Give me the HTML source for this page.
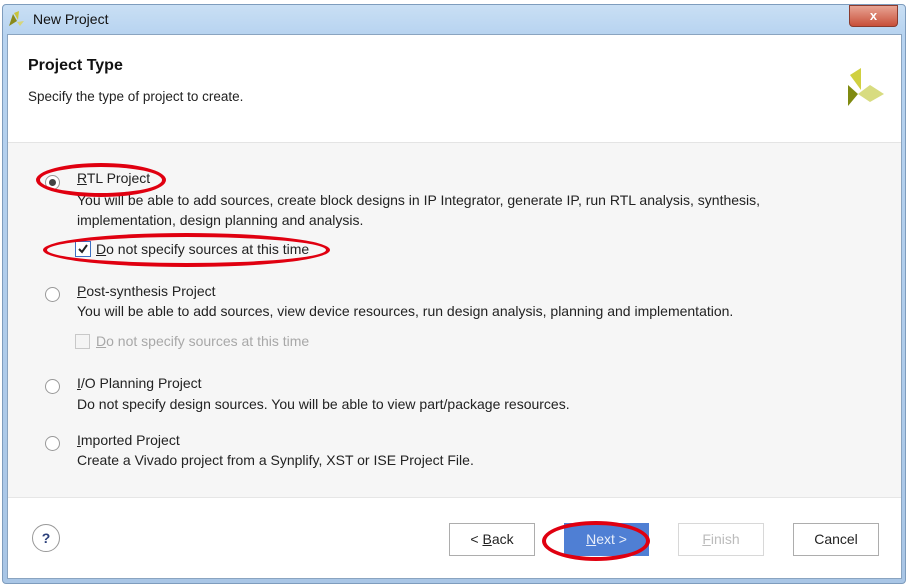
<!DOCTYPE html>
<html><head><style>
body{margin:0;width:907px;height:587px;background:#fff;position:relative;overflow:hidden;font-family:"Liberation Sans",Arial,sans-serif;font-size:14px;color:#222}
.a{position:absolute;white-space:nowrap}
.frame{left:2px;top:4px;width:902px;height:578px;background:linear-gradient(#c9dff4,#b7d3f0 30px,#a9c6e6);border:1px solid #7e9cbd;border-radius:4px}
.inner{left:7px;top:34px;width:893px;height:543px;background:#f6f6f6;border:1px solid #8aa4c0}
.hdr{left:8px;top:35px;width:893px;height:107px;background:#fff;border-bottom:1px solid #e4e4e4}
.ftr{left:8px;top:497px;width:893px;height:80px;background:#fff;border-top:1px solid #e6e6e6}
.radio{width:13px;height:13px;border:1px solid #999;border-radius:50%;background:#fff}
.btn{top:523px;height:31px;border:1px solid #adadad;background:#fff;text-align:center;line-height:31px;font-size:14px}
.ell{border:4px solid #e00010;border-radius:50%}
u{text-decoration:underline}
</style></head><body>
<div class="a frame"></div>
<svg class="a" style="left:8px;top:11px" width="18" height="16"><polygon points="1,15 5,3 9,10" fill="#8a8a1a"/><polygon points="6,2 11,0 10,9" fill="#c9c43a"/><polygon points="9,11 16,10 12,15" fill="#d6d67a"/></svg>
<div class="a" style="left:33px;top:11px;font-size:14px;color:#111">New Project</div>
<div class="a" style="left:849px;top:5px;width:47px;height:20px;background:linear-gradient(#e8a494,#c8503a);border:1px solid #8a3b2e;border-radius:0 0 4px 4px;color:#fff;font-weight:bold;text-align:center;line-height:19px;font-size:13px">x</div>
<div class="a inner"></div>
<div class="a hdr"></div>
<div class="a" style="left:28px;top:57px;font-weight:bold;font-size:16px;color:#111">Project Type</div>
<div class="a" style="left:28px;top:89px;font-size:13.5px">Specify the type of project to create.</div>
<svg class="a" style="left:846px;top:68px" width="40" height="40"><polygon points="2,38 2,17 12,26" fill="#7f8a10"/><polygon points="4,7 15,0 15,22" fill="#d0d040"/><polygon points="12,26 24,17 38,26 24,34" fill="#d8dc80"/></svg>
<div class="a ftr"></div>

<div class="a radio" style="left:45px;top:175px"></div><div class="a" style="left:49px;top:179px;width:7px;height:7px;border-radius:50%;background:#444"></div>
<div class="a" style="left:77px;top:170px"><u>R</u>TL Project</div>
<div class="a" style="left:77px;top:190px;line-height:20px">You will be able to add sources, create block designs in IP Integrator, generate IP, run RTL analysis, synthesis,<br>implementation, design planning and analysis.</div>
<div class="a" style="left:75px;top:241px;width:14px;height:14px;border:1px solid #3c6fc4;background:#fff"></div>
<svg class="a" style="left:77px;top:243px" width="12" height="12"><path d="M2 6 L5 9 L10 2" stroke="#222" stroke-width="2" fill="none"/></svg>
<div class="a" style="left:96px;top:241px"><u>D</u>o not specify sources at this time</div>

<div class="a radio" style="left:45px;top:287px"></div>
<div class="a" style="left:77px;top:283px"><u>P</u>ost-synthesis Project</div>
<div class="a" style="left:77px;top:303px">You will be able to add sources, view device resources, run design analysis, planning and implementation.</div>
<div class="a" style="left:75px;top:334px;width:13px;height:13px;border:1px solid #c8c8c8;background:#f4f4f4"></div>
<div class="a" style="left:96px;top:333px;color:#a8a8a8"><u>D</u>o not specify sources at this time</div>

<div class="a radio" style="left:45px;top:379px"></div>
<div class="a" style="left:77px;top:375px"><u>I</u>/O Planning Project</div>
<div class="a" style="left:77px;top:396px">Do not specify design sources. You will be able to view part/package resources.</div>

<div class="a radio" style="left:45px;top:436px"></div>
<div class="a" style="left:77px;top:432px"><u>I</u>mported Project</div>
<div class="a" style="left:77px;top:452px">Create a Vivado project from a Synplify, XST or ISE Project File.</div>

<div class="a" style="left:32px;top:524px;width:26px;height:26px;border:1px solid #999;border-radius:50%;background:#fff;text-align:center;line-height:26px;font-weight:bold;color:#2a3f7a;font-size:14px">?</div>
<div class="a btn" style="left:449px;width:84px">&lt; <u>B</u>ack</div>
<div class="a btn" style="left:564px;width:83px;background:#4f7fd4;border-color:#4f7fd4;color:#e8eefa"><u>N</u>ext &gt;</div>
<div class="a btn" style="left:678px;width:84px;color:#bbb;border-color:#d8d8d8"><u>F</u>inish</div>
<div class="a btn" style="left:793px;width:84px">Cancel</div>

<div class="a ell" style="left:36px;top:163px;width:122px;height:26px"></div>
<div class="a ell" style="left:43px;top:233px;width:279px;height:26px"></div>
<div class="a ell" style="left:542px;top:521px;width:100px;height:32px"></div>
</body></html>
